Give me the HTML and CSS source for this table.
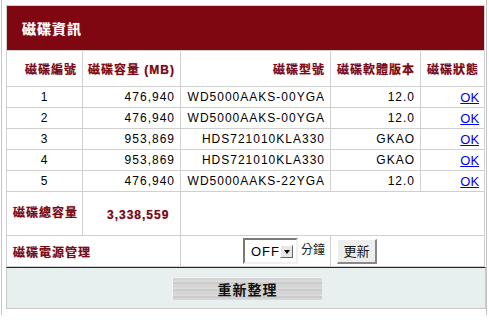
FILE: index.html
```html
<!DOCTYPE html>
<html lang="zh-Hant">
<head>
    <meta charset="UTF-8">
    <title>磁碟資訊</title>
    <link rel="stylesheet" href="styles.css">
</head>
<body>
<div class="frame">
    <table class="disks">
        <colgroup>
            <col class="c-no">
            <col class="c-size">
            <col class="c-model">
            <col class="c-fw">
            <col class="c-state">
        </colgroup>
        <tr class="title-row">
            <th colspan="5">磁碟資訊</th>
        </tr>
        <tr class="head-row">
            <th>磁碟編號</th>
            <th>磁碟容量 (MB)</th>
            <th>磁碟型號</th>
            <th>磁碟軟體版本</th>
            <th>磁碟狀態</th>
        </tr>
        <tr class="disk">
            <td class="num">1</td>
            <td>476,940</td>
            <td>WD5000AAKS-00YGA</td>
            <td>12.0</td>
            <td><a href="#">OK</a></td>
        </tr>
        <tr class="disk">
            <td class="num">2</td>
            <td>476,940</td>
            <td>WD5000AAKS-00YGA</td>
            <td>12.0</td>
            <td><a href="#">OK</a></td>
        </tr>
        <tr class="disk">
            <td class="num">3</td>
            <td>953,869</td>
            <td>HDS721010KLA330</td>
            <td>GKAO</td>
            <td><a href="#">OK</a></td>
        </tr>
        <tr class="disk">
            <td class="num">4</td>
            <td>953,869</td>
            <td>HDS721010KLA330</td>
            <td>GKAO</td>
            <td><a href="#">OK</a></td>
        </tr>
        <tr class="disk">
            <td class="num">5</td>
            <td>476,940</td>
            <td>WD5000AAKS-22YGA</td>
            <td>12.0</td>
            <td><a href="#">OK</a></td>
        </tr>
        <tr class="total-row">
            <td class="label">磁碟總容量</td>
            <td class="total">3,338,559</td>
            <td colspan="3"></td>
        </tr>
        <tr class="power-row">
            <td class="label" colspan="2">磁碟電源管理</td>
            <td>
                <div class="timer">
                    <span class="select"><span class="select-value">OFF</span><span class="select-arrow"></span></span>
                    <span class="unit">分鐘</span>
                </div>
            </td>
            <td colspan="2">
                <div class="apply"><button class="btn">更新</button></div>
            </td>
        </tr>
    </table>
    <div class="actions">
        <button class="refresh">重新整理</button>
    </div>
</div>
</body>
</html>
```

FILE: styles.css
```css
html, body {
    margin: 0;
    padding: 0;
    background: #fff;
}
body {
    font-family: "Liberation Sans", Arial, "Noto Sans CJK TC", sans-serif;
    font-size: 12px;
    color: #000;
}
.frame {
    width: 480px;
    margin-left: 1px;
    padding: 5px 0 6px 4px;
    border-left: 1px solid #c4c4c4;
    border-right: 1px solid #c4c4c4;
}

/* disk table */
.disks {
    width: 478px;
    border-collapse: collapse;
    table-layout: fixed;
}
.c-no { width: 76px; }
.c-size { width: 98px; }
.c-model { width: 150px; }
.c-fw { width: 90px; }
.c-state { width: 64px; }

.disks th,
.disks td {
    border: 1px solid #d0d0d0;
    padding: 0 5px;
    text-align: right;
    white-space: nowrap;
}
.title-row th {
    height: 44px;
    padding: 0 0 0 15px;
    background: #7e0712;
    border-color: #d0d0d0;
    color: #fff;
    font-family: "Noto Sans CJK TC", sans-serif;
    font-size: 14px;
    font-weight: bold;
    letter-spacing: 1px;
    text-align: left;
    text-shadow: 0 0 1px rgba(255, 255, 255, .6);
}
.head-row th,
.label,
.total {
    color: #7a0a16;
    font-family: "Liberation Sans", Arial, "Noto Sans CJK TC", sans-serif;
    font-weight: bold;
    letter-spacing: 1px;
    text-shadow: 0 0 1px rgba(122, 10, 22, .55);
}
.head-row th {
    height: 35px;
    padding-right: 5px;
}
.disk td {
    height: 20px;
    letter-spacing: 1px;
    font-size: 12px;
}
.disk td.num {
    text-align: center;
    padding: 0;
}
.disk a {
    color: #0000ee;
    letter-spacing: 0;
    font-size: 13px;
}

.total-row td {
    height: 39px;
}
.disks .label {
    text-align: left;
    padding-left: 6px;
    vertical-align: middle;
}
.total-row .label {
    padding-bottom: 4px;
}
.disks .total {
    text-align: left;
    padding-left: 24px;
    padding-top: 2px;
}

.power-row td {
    height: 30px;
    padding-top: 0;
    padding-bottom: 0;
    vertical-align: middle;
}
.timer {
    display: flex;
    justify-content: flex-end;
    align-items: center;
    gap: 3px;
    height: 28px;
}
.select {
    display: flex;
    align-items: center;
    box-sizing: border-box;
    width: 55px;
    height: 26px;
    padding: 0 3px 0 6px;
    border-top: 2px solid #7a7a7a;
    border-left: 2px solid #7a7a7a;
    border-right: 2px solid #f0f0f0;
    border-bottom: 2px solid #f0f0f0;
    background: #fff;
    font-size: 13px;
    letter-spacing: 1px;
}
.select-value {
    flex: 1;
    text-align: left;
}
.select-arrow {
    position: relative;
    width: 12px;
    height: 11px;
    background: #e6e6e6;
    border-top: 1px solid #fff;
    border-left: 1px solid #fff;
    border-right: 1px solid #666;
    border-bottom: 1px solid #666;
}
.select-arrow::after {
    content: "";
    position: absolute;
    left: 3px;
    top: 4px;
    border-left: 3px solid transparent;
    border-right: 3px solid transparent;
    border-top: 4px solid #000;
}
.unit {
    font-family: "Noto Sans CJK TC", sans-serif;
    font-size: 12px;
    line-height: 14px;
    color: #222;
    margin-top: -4px;
}
.disks .power-row td:last-child {
    padding-left: 6px;
}
.apply {
    display: flex;
    align-items: center;
    height: 28px;
}
.btn {
    box-sizing: border-box;
    width: 40px;
    height: 25px;
    padding: 0;
    background: #ededed;
    border-top: 1px solid #fff;
    border-left: 1px solid #fff;
    border-right: 2px solid #888;
    border-bottom: 2px solid #888;
    font-family: "Noto Sans CJK TC", sans-serif;
    font-size: 13px;
    line-height: 20px;
    color: #111;
}

/* refresh bar */
.actions {
    display: flex;
    justify-content: center;
    align-items: center;
    width: 476px;
    height: 40px;
    background: #e8f0ef;
    border-top: 1px solid #222;
    border-left: 1px solid #c8c8c8;
    border-right: 1px solid #c8c8c8;
    border-bottom: 1px solid #c8c8c8;
    padding-left: 2px;
}
.refresh {
    width: 150px;
    height: 23px;
    padding: 0;
    border: 0;
    border-top: 1px solid #f4f4f4;
    border-left: 1px solid #f4f4f4;
    background: repeating-linear-gradient(180deg, #d9d9d9 0, #cfcfcf 2px, #e2e2e2 3px, #c6c6c6 5px, #dadada 7px);
    font-family: "Noto Sans CJK TC", sans-serif;
    font-size: 14px;
    font-weight: bold;
    letter-spacing: 1px;
    color: #111;
}
```
